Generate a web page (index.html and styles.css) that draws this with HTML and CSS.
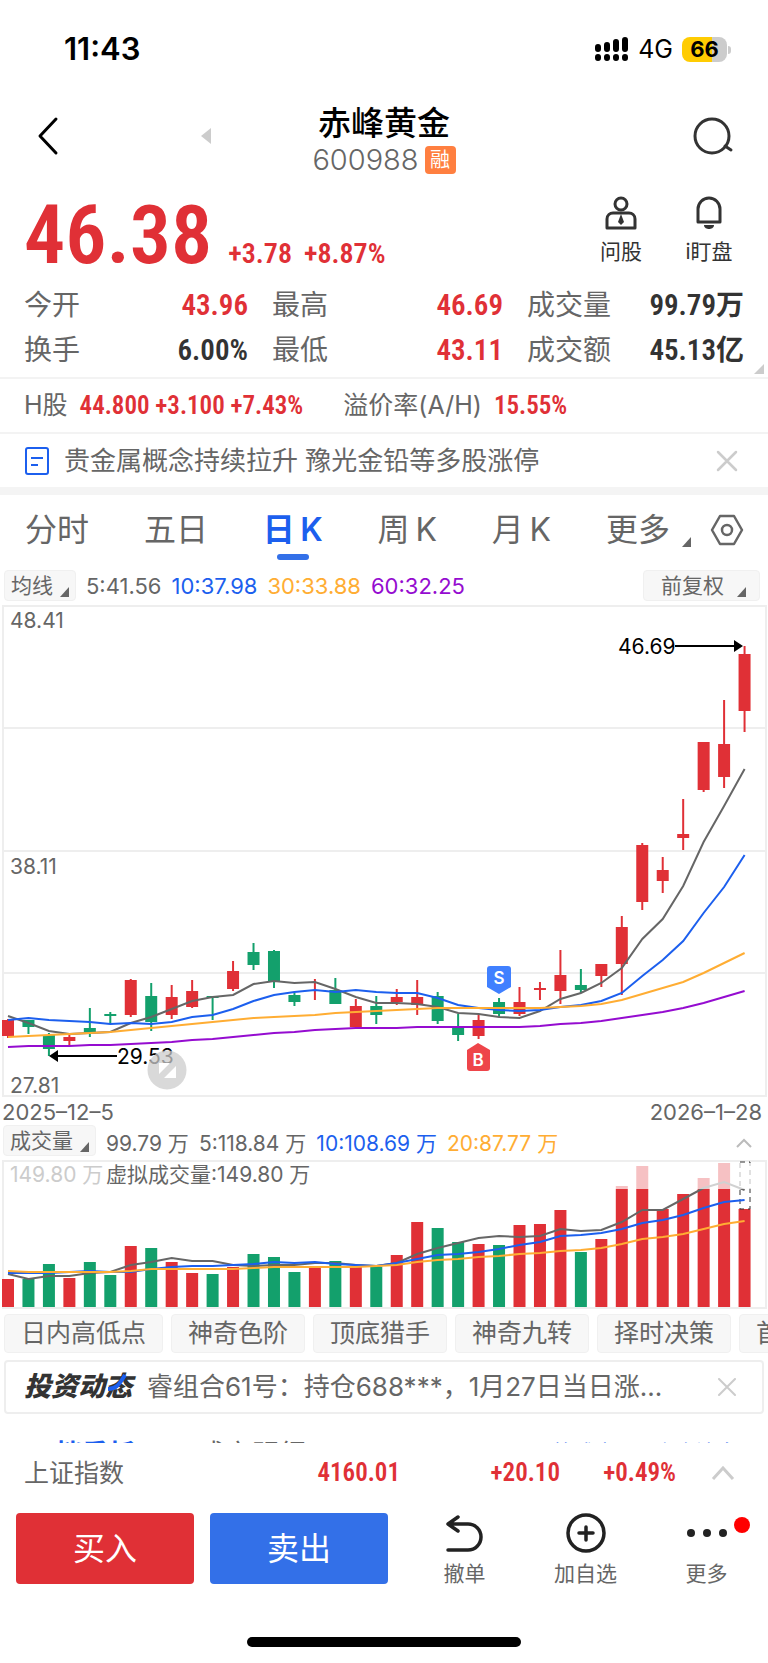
FILE: index.html
```html
<!DOCTYPE html>
<html lang="zh-CN">
<head>
<meta charset="utf-8">
<meta name="viewport" content="width=device-width, initial-scale=1">
<title>赤峰黄金 600988</title>
<link rel="stylesheet" href="styles.css">
</head>
<body>
<div class="status">
  <span class="clock">11:43</span>
  <div class="status-right">
    <svg class="signal" width="34" height="26" viewBox="0 0 34 26" stroke="#000" stroke-width="6" stroke-linecap="round"><path d="M3 11v2M12 9v4M21 6v7M30 4v9M3 21v1M12 21v1M21 21v1M30 21v1"/></svg>
    <span class="network">4G</span>
    <span class="battery"><span class="battery-level">66</span></span>
  </div>
</div>

<header class="header">
  <button class="icon-btn back" aria-label="返回"><svg width="24" height="44" viewBox="0 0 24 44" fill="none" stroke="#000" stroke-width="3" stroke-linecap="round" stroke-linejoin="round"><path d="M20 5 4 22l16 17"/></svg></button>
  <button class="icon-btn prev" aria-label="上一只"><svg width="12" height="44" viewBox="0 0 12 44"><path d="M11 14v16L1 22z" fill="#ccc"/></svg></button>
  <div class="title">
    <h1>赤峰黄金</h1>
    <div class="code">600988<span class="badge">融</span></div>
  </div>
  <button class="icon-btn search" aria-label="搜索"><svg width="44" height="44" viewBox="0 0 44 44" fill="none" stroke="#333" stroke-width="3" stroke-linecap="round"><circle cx="22" cy="22" r="17"/><path d="m35 32 6 4"/></svg></button>
</header>

<section class="quote">
  <div class="price-row up">
    <span class="price">46.38</span>
    <span class="delta">+3.78</span>
    <span class="delta">+8.87%</span>
  </div>
  <button class="tool"><svg width="32" height="34" viewBox="0 0 32 34" fill="none" stroke="#333" stroke-width="3"><circle cx="16" cy="8" r="6"/><path d="M2 32V23c0-4 3-6 6-6h16c3 0 6 2 6 6v9z" stroke-linejoin="round"/><path d="m16 18 3 8-3 3-3-3z" fill="#333" stroke="none"/></svg><span>问股</span></button>
  <button class="tool"><svg width="32" height="34" viewBox="0 0 32 34" fill="none" stroke="#333" stroke-width="3"><path d="M5 26V13a11 11 0 0 1 22 0v13z" stroke-linejoin="round"/><path d="M11 29h10c0 3-3 4-5 4s-5-1-5-4z" fill="#333" stroke="none"/></svg><span>i盯盘</span></button>
</section>

<dl class="stats">
  <div><dt>今开</dt><dd class="up">43.96</dd></div>
  <div><dt>最高</dt><dd class="up">46.69</dd></div>
  <div><dt>成交量</dt><dd>99.79<span class="unit">万</span></dd></div>
  <div><dt>换手</dt><dd>6.00%</dd></div>
  <div><dt>最低</dt><dd class="up">43.11</dd></div>
  <div><dt>成交额</dt><dd>45.13<span class="unit">亿</span></dd></div>
  <svg class="corner" width="12" height="12" viewBox="0 0 12 12"><path d="M11 1v10H1z" fill="#ccc"/></svg>
</dl>

<div class="hshare">
  <span>H股</span><span class="num up">44.800 +3.100 +7.43%</span>
  <span class="premium">溢价率(A/H)</span><span class="num up">15.55%</span>
</div>

<div class="news">
  <svg width="24" height="28" viewBox="0 0 24 28" fill="none" stroke="#1c5fee" stroke-width="2"><rect x="1" y="1" width="22" height="26" rx="2"/><path d="M6 11h12M6 18h7"/></svg>
  <a href="#news">贵金属概念持续拉升 豫光金铅等多股涨停</a>
  <button class="close" aria-label="关闭"><svg width="22" height="22" viewBox="0 0 22 22" stroke="#ccc" stroke-width="2.5" stroke-linecap="round"><path d="m2 2 18 18M20 2 2 20"/></svg></button>
</div>

<nav class="tabs">
  <button>分时</button>
  <button>五日</button>
  <button class="active">日&thinsp;K</button>
  <button>周&thinsp;K</button>
  <button>月&thinsp;K</button>
  <button class="more">更多<svg class="tri" width="9" height="10" viewBox="0 0 9 10"><path d="M9 0v10H0z" fill="#666"/></svg></button>
  <button class="settings" aria-label="设置"><svg width="34" height="32" viewBox="0 0 34 32" fill="none" stroke="#666" stroke-width="2.5" stroke-linejoin="round"><path d="M10 2h14l8 14-8 14H10L2 16z"/><circle cx="17" cy="16" r="5"/></svg></button>
</nav>

<div class="legend">
  <button class="pill">均线<svg class="tri" width="9" height="10" viewBox="0 0 9 10"><path d="M9 0v10H0z" fill="#666"/></svg></button>
  <span>5:41.56</span><span class="c10">10:37.98</span><span class="c30">30:33.88</span><span class="c60">60:32.25</span>
  <button class="pill adjust">前复权<svg class="tri" width="9" height="10" viewBox="0 0 9 10"><path d="M9 0v10H0z" fill="#666"/></svg></button>
</div>

<svg class="chart" id="kline" viewBox="0 5 768 492" role="img" aria-label="日K线图"></svg>
<div class="dates"><time>2025–12–5</time><time>2026–1–28</time></div>

<div class="legend vol">
  <button class="pill">成交量<svg class="tri" width="9" height="10" viewBox="0 0 9 10"><path d="M9 0v10H0z" fill="#666"/></svg></button>
  <span>99.79 万</span><span>5:118.84 万</span><span class="c10">10:108.69 万</span><span class="c30">20:87.77 万</span>
  <button class="collapse" aria-label="收起"><svg width="16" height="10" viewBox="0 0 16 10" fill="none" stroke="#bbb" stroke-width="2"><path d="m1 9 7-7 7 7"/></svg></button>
</div>
<svg class="chart" id="volume" viewBox="0 60 768 149" role="img" aria-label="成交量图"></svg>

<div class="chips">
  <button>日内高低点</button><button>神奇色阶</button><button>顶底猎手</button><button>神奇九转</button><button>择时决策</button><button>首板</button>
</div>

<div class="feed">
  <strong class="feed-logo">投资动<span class="feed-last">态<svg width="22" height="18" viewBox="0 0 22 18" fill="none" stroke="#1c5fee" stroke-width="4"><path d="M1 15c8 0 11-4 17-14"/></svg></span></strong>
  <a href="#feed">睿组合61号：持仓688***，1月27日当日涨...</a>
  <button class="close" aria-label="关闭"><svg width="18" height="18" viewBox="0 0 18 18" stroke="#ccc" stroke-width="2" stroke-linecap="round"><path d="m1 1 16 16M17 1 1 17"/></svg></button>
</div>

<div class="peek">
  <a class="peek-on" href="#depth">五档委托</a><a href="#trades">成交明细</a>
  <a class="peek-link first" href="#tick">逐笔成交</a><a class="peek-link" href="#flow">资金流向</a>
</div>

<footer>
  <div class="index">
    <span class="index-name">上证指数</span>
    <span class="num up">4160.01</span><span class="num up">+20.10</span><span class="num up">+0.49%</span>
    <button class="collapse" aria-label="展开"><svg width="24" height="14" viewBox="0 0 24 14" fill="none" stroke="#ccc" stroke-width="3"><path d="M2 13 12 2l10 11"/></svg></button>
  </div>
  <div class="actions">
    <button class="trade buy">买入</button>
    <button class="trade sell">卖出</button>
    <button class="action"><svg width="44" height="40" viewBox="0 0 44 40" fill="none" stroke="#222" stroke-width="3.5" stroke-linecap="round" stroke-linejoin="round"><path d="M15 4 5 11l10 7M5 11h20a13 13 0 0 1 0 26H5"/></svg><span>撤单</span></button>
    <button class="action"><svg width="44" height="40" viewBox="0 0 44 40" fill="none" stroke="#222" stroke-width="3.5" stroke-linecap="round"><circle cx="22" cy="20" r="18"/><path d="M22 14v13M15 20h14"/></svg><span>加自选</span></button>
    <button class="action"><svg width="44" height="40" viewBox="0 0 44 40" fill="#222"><circle cx="6" cy="20" r="4"/><circle cx="22" cy="20" r="4"/><circle cx="38" cy="20" r="4"/></svg><span>更多</span><i class="dot"></i></button>
  </div>
  <div class="home"></div>
</footer>
<script src="chart.js"></script>
</body>
</html>
```
FILE: styles.css
```css
* { box-sizing: border-box; }
body {
  margin: 0;
  background: #fff;
  color: #666;
  font-family: Inter, "Noto Sans CJK SC", sans-serif;
  font-size: 26px;
  overflow-x: hidden;
}
button {
  border: 0;
  padding: 0;
  background: none;
  color: inherit;
  font: inherit;
}
a { color: inherit; text-decoration: none; }
svg { display: block; flex: none; }
.up { color: #e03036; }
.num, .price-row, dd { font-family: "Roboto Condensed", Roboto, "Noto Sans CJK SC", sans-serif; font-weight: 600; }
.num { font-size: 25px; }

.status {
  display: flex;
  justify-content: space-between;
  align-items: center;
  padding: 34px 41px 36px 64px;
  line-height: 30px;
  color: #000;
}
.clock { font-size: 31px; font-weight: 600; }
.status-right { display: flex; align-items: center; gap: 9px; }
.network { font-size: 25px; }
.battery {
  position: relative;
  width: 45px;
  height: 25px;
  border-radius: 8px;
  background: linear-gradient(90deg, #ffcc02 66%, #ccc 66%);
}
.battery::after {
  content: "";
  position: absolute;
  left: 46px;
  top: 9px;
  width: 3px;
  height: 8px;
  border-radius: 0 4px 4px 0;
  background: #ccc;
}
.battery-level { display: block; text-align: center; font-size: 22px; font-weight: 700; line-height: 25px; }

.header {
  display: grid;
  grid-template-columns: 160px 60px 1fr 222px;
  align-items: start;
  padding: 3px 34px 6px 36px;
}
.icon-btn { margin-top: 11px; justify-self: start; }
.prev { margin-left: 4px; }
.search { justify-self: end; }
.title { text-align: center; }
h1 { margin: 0; color: #000; font-size: 33px; font-weight: 500; line-height: 40px; }
.code { display: flex; justify-content: center; align-items: center; gap: 6px; font-size: 29px; font-weight: 300; line-height: 34px; }
.badge { width: 31px; border-radius: 4px; background: #ff7f40; color: #fff; font-size: 20px; font-weight: 400; line-height: 28px; }

.quote { display: flex; align-items: flex-start; height: 94px; padding: 12px 24px 0; }
.price-row { display: flex; align-items: baseline; flex: 1; gap: 12px; line-height: 80px; }
.price { margin-right: 4px; font-size: 82px; }
.delta { font-size: 28px; line-height: 30px; }
.tool { display: flex; flex-direction: column; align-items: center; gap: 7px; width: 60px; margin: 1px 0 0 28px; color: #333; font-size: 21px; line-height: 30px; }
.tool + .tool { margin-right: 5px; }

.stats {
  position: relative;
  display: grid;
  grid-template-columns: 224fr 231fr 217fr;
  column-gap: 24px;
  margin: 0;
  padding: 5px 24px;
  border-bottom: 2px solid #f3f3f3;
  font-size: 28px;
}
.stats div { display: flex; justify-content: space-between; align-items: center; height: 45px; line-height: 40px; }
dd { margin: 0; color: #333; font-size: 29px; }
dd.up { color: #e03036; }
.unit { font-size: 28px; line-height: 28px; }
.corner { position: absolute; right: 3px; bottom: 2px; }

.hshare, .news { display: flex; align-items: center; padding: 0 24px; line-height: 53px; }
.hshare { border-bottom: 2px solid #f3f3f3; gap: 12px; font-size: 25px; }
.premium { margin-left: 28px; }
.news { padding: 0 30px 0 25px; gap: 15px; border-bottom: 8px solid #f4f4f4; }
.close { margin-left: auto; }

.tabs { display: flex; justify-content: space-between; align-items: center; padding: 0 24px 0 25px; font-size: 32px; line-height: 70px; }
.tabs button { position: relative; }
.tabs .active { color: #1c5fee; font-weight: 600; }
.active::after {
  content: "";
  position: absolute;
  left: calc(50% - 16px);
  bottom: 5px;
  width: 32px;
  height: 6px;
  border-radius: 3px;
  background: #3370e8;
}
.tabs .more { display: flex; align-items: center; gap: 12px; margin-right: -36px; }
.more .tri { margin-top: 24px; }

.legend { display: flex; align-items: center; gap: 10px; height: 40px; padding: 1px 8px 0 4px; font-size: 22px; line-height: 28px; }
.pill { display: flex; align-items: center; gap: 7px; padding: 0 6px; height: 31px; border: 1px solid #f0f0f0; border-radius: 4px; background: #f7f7f7; font-size: 21px; }
.pill .tri { margin-top: 12px; }
.adjust { margin-left: auto; padding: 0 13px 0 17px; gap: 13px; }
.c10 { color: #1c5fee; }
.c30 { color: #ffad33; }
.c60 { color: #950cd0; }
.chart { width: 100%; height: auto; }
.chart text { font-size: 21px; fill: #666; }
.dates { display: flex; justify-content: space-between; padding: 2px 6px 0 2px; font-size: 22px; line-height: 26px; }
.vol { height: 35px; align-items: flex-start; padding: 0 16px 0 3px; font-size: 21px; line-height: 38px; }
.vol .pill { line-height: 28px; }
.collapse { margin-left: auto; align-self: center; }

.chips { display: flex; gap: 8px; margin-top: 5px; padding-left: 4px; overflow: hidden; }
.chips button { flex: none; padding: 0 16px; border: 1px solid #f0f0f0; border-radius: 4px; background: #f7f7f7; font-size: 25px; line-height: 37px; }

.feed { display: flex; align-items: center; gap: 15px; margin: 7px 4px 0; padding: 0 26px 0 18px; border: 2px solid #eee; border-radius: 4px; line-height: 50px; }
.feed-logo { color: #333; font-size: 27px; font-weight: 900; font-style: italic; }
.feed-last { position: relative; }
.feed-last svg { position: absolute; left: 2px; top: 4px; }

.peek { display: flex; gap: 62px; height: 4px; margin-top: 25px; padding: 0 30px 0 28px; overflow: hidden; font-size: 27px; line-height: 31px; }
.peek-on { color: #1c5fee; font-weight: 700; }
.peek-link { color: #1c5fee; font-size: 21px; line-height: 27px; }
.first { margin: 0 -24px 0 auto; }

.index { display: grid; grid-template-columns: 1fr 180px 160px 116px 59px; align-items: center; padding: 0 33px 0 24px; line-height: 60px; }
.index-name { font-size: 25px; }
.index .num { text-align: right; }
.actions { display: flex; align-items: flex-start; gap: 16px; padding: 10px 9px 48px 16px; }
.trade { flex: none; width: 178px; border-radius: 4px; color: #fff; font-size: 32px; line-height: 71px; }
.buy { background: #e03036; }
.sell { margin-right: 8px; background: #3370e8; }
.action { position: relative; flex: 1; display: flex; flex-direction: column; align-items: center; gap: 6px; font-size: 21px; line-height: 30px; }
.dot { position: absolute; left: calc(50% + 27px); top: 4px; width: 16px; height: 16px; border-radius: 50%; background: #f00; }
.home { width: 274px; height: 10px; margin: 0 auto 17px; border-radius: 5px; background: #000; }

.chart .mark { fill: #000; }
.chart .faint { fill: #ccc; }
.chart .flag { fill: #fff; font-size: 17px; font-weight: 600; text-anchor: middle; }
```
FILE: chart.js
```js
const RED = '#e03036', GREEN = '#13a06c';
const x = i => 8 + i * 20.46;
const line = (values, color) =>
  `<polyline points="${values.map((v, i) => `${x(i).toFixed(1)},${v}`).join(' ')}" fill="none" stroke="${color}" stroke-width="2"/>`;

// direction, high, body top, body bottom, low
const candles = [
  [1,419,420,436,438],[0,420,420,427,434],[0,433,435,449,456],[1,434,437,441,445],[0,408,428,432,437],
  [0,412,414,416,423],[1,379,380,415,417],[0,383,396,422,431],[1,385,397,415,419],[1,380,391,407,408],
  [0,396,396,398,420],[1,361,371,389,391],[0,343,352,365,370],[0,350,351,381,388],[0,393,395,402,406],
  [1,379,390,391,400],[0,378,390,404,404],[1,399,406,427,427],[0,396,406,415,424],[1,389,397,402,405],
  [1,380,397,405,415],[0,392,396,421,424],[0,414,426,435,441],[1,415,420,436,439],[0,398,402,414,417],
  [1,387,402,414,416],[1,382,388,390,400],[1,350,375,391,404],[0,369,385,390,393],[1,364,364,376,387],
  [1,316,327,364,395],[1,243,245,302,310],[1,257,270,281,293],[1,199,234,238,250],[1,142,142,190,192],
  [1,100,144,177,188],[1,46,54,111,132]
];
const ma5 = [416,423,431,434,433,432,423,417,409,401,397,395,384,381,383,382,389,397,403,403,404,407,413,414,417,418,411,399,393,383,368,339,319,286,242,206,169];
const ma10 = [420,418,420,421,422,424,423,424,422,417,415,409,401,395,392,390,392,390,392,393,393,398,405,408,410,411,410,407,405,401,393,376,360,341,313,287,255];
const ma30 = [437,436,435,434,433,432,430,428,426,424,422,420,418,417,416,415,413,412,411,410,409,408,408,408,408,408,408,407,406,404,400,394,388,382,373,363,353];
const ma60 = [447,446,446,446,445,445,444,443,442,440,439,437,435,433,432,430,429,428,428,428,427,427,427,427,427,427,426,424,423,421,418,415,412,408,403,397,391];

let k = '<g stroke="#eee" stroke-width="2" fill="none"><rect x="3" y="6" width="763" height="490"/><path d="M3 128h763M3 251h763M3 373h763"/></g>';
candles.forEach(([up, hi, top, bottom, low], i) => {
  const c = up ? RED : GREEN;
  k += `<path d="M${x(i)} ${hi}V${low}" stroke="${c}" stroke-width="2"/><rect x="${x(i) - 6}" y="${top}" width="12" height="${bottom - top}" fill="${c}"/>`;
});
k += line(ma5, '#666') + line(ma10, '#1c5fee') + line(ma30, '#ffad33') + line(ma60, '#950cd0');
k += `<text x="10" y="28">48.41</text><text x="10" y="274">38.11</text><text x="10" y="493">27.81</text>
<path d="M56 456h61M675 46h62" stroke="#000" stroke-width="2"/><path d="M49 456l9-6v12zM743 46l-9-6v12z"/>
<text class="mark" x="117" y="464">29.53</text><text class="mark" x="618" y="54">46.69</text>
<circle cx="167" cy="470" r="19.5" fill="#ccc" opacity=".75"/><path d="M159 463h11l-11 11zM176 466v12h-12z" fill="#fff"/>
<path d="M490 366h18q3 0 3 3v18l-12 7-12-7v-18q0-3 3-3z" fill="#4080ff"/><path d="M478 443l12 7v18q0 3-3 3h-17q-3 0-3-3v-18z" fill="#ee454a"/>
<text class="flag" x="499" y="384">S</text><text class="flag" x="478" y="466">B</text>`;
document.getElementById('kline').innerHTML = k;

const volumes = [179,179,164,178,162,175,146,148,162,173,174,167,154,157,172,168,161,167,167,155,122,128,142,144,145,125,124,110,152,139,86,66,109,94,78,63,109];
const v5 = [174,179,176,176,173,172,165,162,158,161,161,165,166,165,165,163,163,165,166,163,154,148,143,138,136,137,136,129,131,130,122,110,110,99,88,82,90];
const v10 = [173,173,173,172,171,172,172,169,167,166,166,165,164,162,163,162,164,165,166,163,159,155,154,152,149,145,142,136,135,133,129,123,120,115,108,102,100];
const v20 = [171,172,172,172,172,172,171,169,169,169,169,169,168,167,167,167,167,167,166,165,162,160,159,157,156,154,153,151,150,148,144,139,137,134,129,124,121];
let v = '<rect x="3" y="61" width="763" height="147" stroke="#eee" stroke-width="2" fill="none"/>';
volumes.forEach((top, i) => {
  v += `<rect x="${x(i) - 6}" y="${top}" width="12" height="${207 - top}" fill="${candles[i][0] ? RED : GREEN}"/>`;
});
v += '<rect x="740" y="62" width="10" height="47" fill="none" stroke="#333" stroke-dasharray="5 4"/>';
v += line(v5, '#666') + line(v10, '#1c5fee') + line(v20, '#ffad33');
v += `<rect x="4" y="63" width="761" height="26" fill="#fff" opacity=".7"/>
<text class="faint" x="10" y="82">149.80 万</text><text x="106" y="82">虚拟成交量:149.80 万</text>`;
document.getElementById('volume').innerHTML = v;
```
